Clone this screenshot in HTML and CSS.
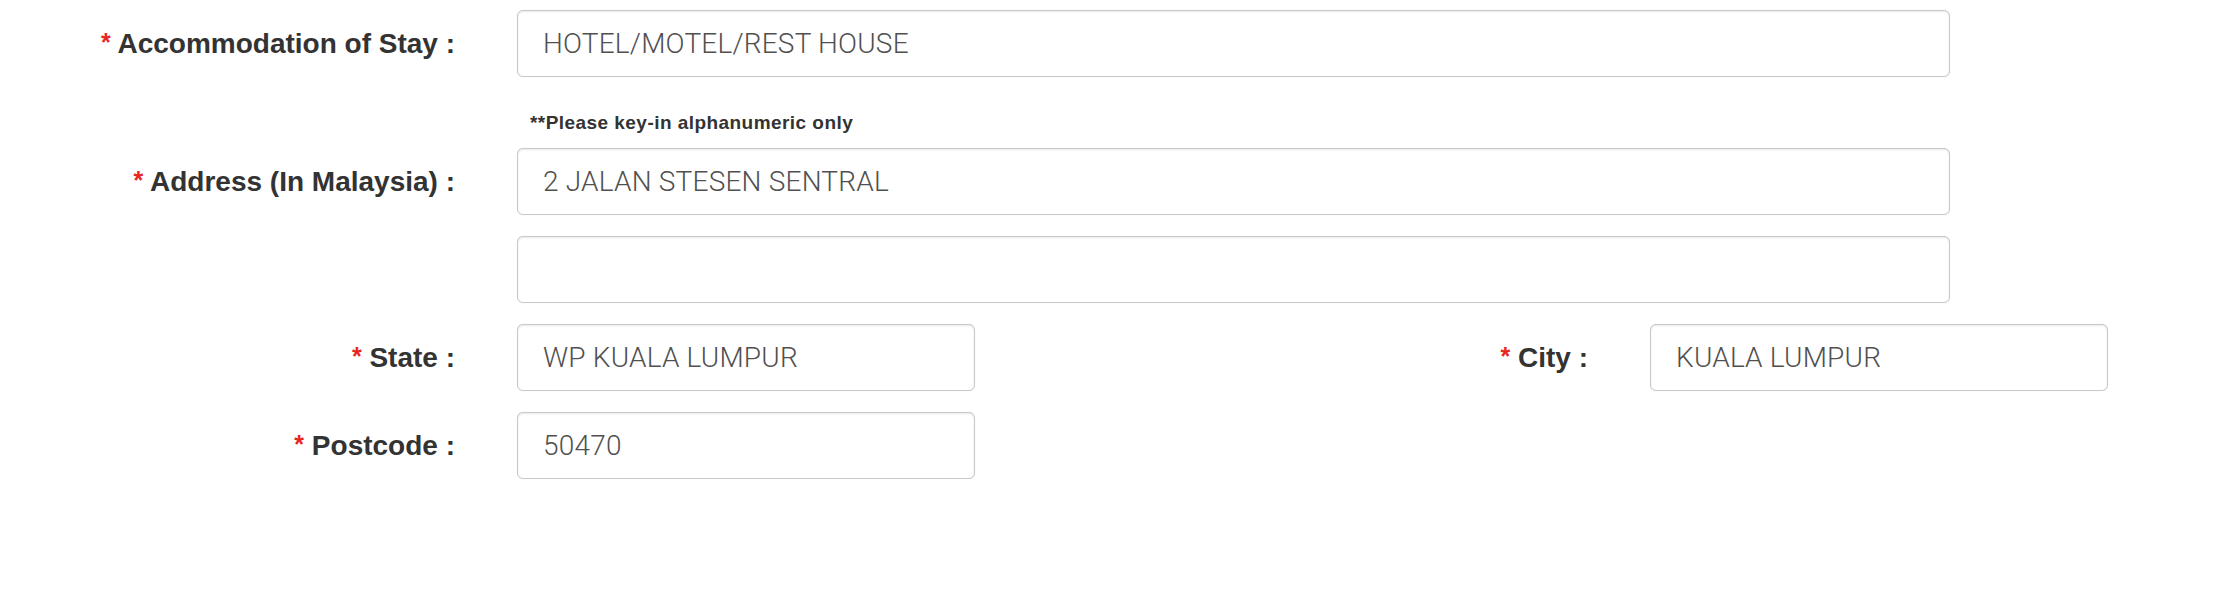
FILE: index.html
```html
<!DOCTYPE html>
<html lang="en">
<head>
<meta charset="utf-8">
<title>Accommodation</title>
<link rel="stylesheet" href="styles.css">
</head>
<body>
<form class="form">
  <div class="row row-full">
    <label class="label"><span class="req">*</span> Accommodation of Stay :</label>
    <input class="field" type="text" value="HOTEL/MOTEL/REST HOUSE">
  </div>
  <div class="row row-full hint-row">
    <span></span>
    <p class="hint">**Please key-in alphanumeric only</p>
  </div>
  <div class="row row-full">
    <label class="label"><span class="req">*</span> Address (In Malaysia) :</label>
    <input class="field" type="text" value="2 JALAN STESEN SENTRAL">
  </div>
  <div class="row row-full">
    <span></span>
    <input class="field" type="text" value="">
  </div>
  <div class="row row-split">
    <label class="label"><span class="req">*</span> State :</label>
    <input class="field" type="text" value="WP KUALA LUMPUR">
    <label class="label"><span class="req">*</span> City :</label>
    <input class="field" type="text" value="KUALA LUMPUR">
  </div>
  <div class="row row-split">
    <label class="label"><span class="req">*</span> Postcode :</label>
    <input class="field" type="text" value="50470">
  </div>
</form>
</body>
</html>
```
FILE: styles.css
```css
html, body {
  margin: 0;
  padding: 0;
  background: #ffffff;
}

.form {
  display: flex;
  flex-direction: column;
  gap: 21px;
  padding-top: 10px;
}

.row {
  display: grid;
  column-gap: 62px;
  align-items: center;
}

.row-full {
  grid-template-columns: 455px 1433px;
}

.row-split {
  grid-template-columns: 455px 458px 551px 458px;
}

.label {
  font-family: "Liberation Sans", Arial, sans-serif;
  font-weight: 700;
  font-size: 28px;
  letter-spacing: 0;
  color: #333333;
  text-align: right;
  white-space: nowrap;
}

.req {
  color: #e8261f;
  font-size: 25px;
  vertical-align: 2px;
}

.field {
  box-sizing: border-box;
  height: 67px;
  width: 100%;
  margin: 0;
  padding: 0 20px 0 25px;
  border: 1px solid #c9c9c9;
  border-radius: 6px;
  box-shadow: inset 0 1px 2px rgba(0, 0, 0, 0.09), 0 0 1px rgba(0, 0, 0, 0.12);
  background: #ffffff;
  font-family: Roboto, "Liberation Sans", sans-serif;
  font-weight: 300;
  font-size: 28px;
  letter-spacing: 0.2px;
  color: #505050;
  outline: none;
}

.hint-row {
  margin-top: 15px;
  margin-bottom: -6px;
}

.hint {
  margin: 0 0 0 13px;
  font-family: "Liberation Sans", Arial, sans-serif;
  font-weight: 700;
  font-size: 19px;
  letter-spacing: 0.45px;
  line-height: 20px;
  color: #333333;
}
```
